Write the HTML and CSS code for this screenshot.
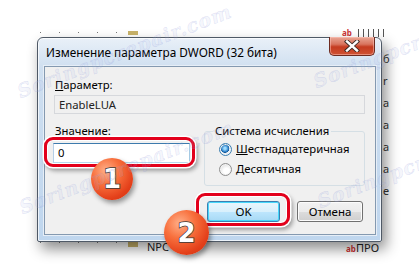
FILE: index.html
```html
<!DOCTYPE html>
<html lang="ru">
<head>
    <meta charset="UTF-8">
    <title>Изменение параметра DWORD</title>
    <link rel="stylesheet" href="styles.css">
</head>
<body>

<div class="desk">
    <div class="behind behind-top">
        <span class="dots"></span><span class="folder"></span>
        <span class="reg-icon">ab</span><span class="bars"></span>
    </div>

    <div class="dialog">
        <div class="titlebar">
            <span class="title">Изменение параметра DWORD (32 бита)</span>
            <button class="close">
                <svg width="20" height="12" viewBox="0 0 20 12">
                    <path d="M5 1.5 L15 10.5 M15 1.5 L5 10.5" stroke="#3a2a26" stroke-width="4.2" stroke-linecap="square"/>
                    <path d="M5 1.5 L15 10.5 M15 1.5 L5 10.5" stroke="#fff" stroke-width="2.4" stroke-linecap="square"/>
                </svg>
            </button>
        </div>

        <div class="client">
            <div class="label first"><u>П</u>араметр:</div>
            <div class="textbox readonly">EnableLUA</div>

            <div class="row">
                <div class="value-col">
                    <div class="label">Значение:</div>
                    <div class="textbox value">0</div>
                </div>
                <div class="group">
                    <div class="group-title">Система исчисления</div>
                    <div class="radio checked"><span class="dot"></span><span><u>Ш</u>естнадцатеричная</span></div>
                    <div class="radio"><span class="dot"></span><span><u>Д</u>есятичная</span></div>
                </div>
            </div>

            <div class="buttons">
                <button class="btn default">OK</button>
                <button class="btn cancel">Отмена</button>
            </div>

            <!-- annotation marks laid over the dialog -->
            <span class="ring ring-value"></span>
            <span class="ring ring-ok"></span>
            <span class="badge badge-1">1</span>
            <span class="badge badge-2">2</span>
        </div>
    </div>

    <div class="behind behind-bottom">
        <span class="dots"></span><span class="folder"></span><span class="npc">NPC</span>
        <span class="reg-icon small">ab</span><span class="pro">ПРО</span>
    </div>

    <div class="side-letters">б<br>r<br>а<br>а<br>а<br>а<br>е</div>

    <span class="mark mark-1">Soringpcrepair.com</span>
    <span class="mark mark-2">Soringpcrepair.com</span>
    <span class="mark mark-3">Soringpcrep</span>
    <span class="mark mark-4">Soringpcrep</span>
</div>

</body>
</html>
```

FILE: styles.css
```css
body {
    margin: 0;
    background: #fff;
    font-family: 'Noto Sans', 'Open Sans', sans-serif;
    font-size: 11.3px;
    color: #000;
    overflow: hidden;
}

.desk {
    position: relative;
    width: 419px;
    height: 279px;
    padding: 37px 0 0 37px;
    box-sizing: border-box;
    overflow: hidden;
}

/* registry editor peeking from behind the dialog */
.behind {
    position: absolute;
    left: 40px;
    width: 345px;
    height: 8px;
}

.behind-top {
    top: 29px;
}

.behind-bottom {
    top: 241px;
    height: 12px;
}

.dots {
    position: absolute;
    left: 0;
    top: 3px;
    width: 92px;
    height: 1px;
    background: repeating-linear-gradient(90deg, #777 0 1px, transparent 1px 19px);
}

.behind-bottom .dots {
    top: 1px;
}

.folder {
    position: absolute;
    left: 88px;
    top: 2px;
    width: 10px;
    height: 4px;
    background: #c9b36a;
}

.behind-bottom .folder {
    top: 0;
    height: 6px;
}

.npc {
    position: absolute;
    left: 107px;
    top: -2px;
    font-size: 11px;
    color: #222;
}

.reg-icon {
    position: absolute;
    left: 302px;
    top: -2px;
    font-size: 8px;
    font-weight: bold;
    color: #c33;
}

.reg-icon.small {
    left: 306px;
    top: 2px;
}

.bars {
    position: absolute;
    left: 318px;
    top: 0;
    width: 26px;
    height: 8px;
    background: repeating-linear-gradient(90deg, #555 0 1px, transparent 1px 5px);
}

.pro {
    position: absolute;
    left: 316px;
    top: -1px;
    font-size: 11px;
    color: #222;
}

.side-letters {
    position: absolute;
    left: 383px;
    top: 48px;
    font-size: 11px;
    line-height: 22px;
    color: #333;
}

/* dialog window */
.dialog {
    position: relative;
    z-index: 1;
    width: 345px;
    height: 205px;
    box-sizing: border-box;
    display: flex;
    flex-direction: column;
    border: 1px solid #4f5966;
    border-radius: 6px 6px 2px 2px;
    background: linear-gradient(#e9f0f8, #cfdff0 30px, #bfd6ee);
    box-shadow: 4px 7px 14px rgba(0, 0, 0, 0.45), inset 0 0 0 1px rgba(255, 255, 255, 0.7);
    padding: 0 5px 6px 6px;
}

.titlebar {
    height: 28px;
    display: flex;
    align-items: flex-start;
    justify-content: space-between;
}

.title {
    margin-top: 6px;
    margin-left: 2px;
    font-size: 11.8px;
}

.close {
    width: 46px;
    height: 19px;
    margin-top: -1px;
    margin-right: 1px;
    padding: 0;
    border: 1px solid #6e2b20;
    border-top: none;
    border-radius: 0 0 5px 5px;
    background: linear-gradient(#e9a796, #d9745e 40%, #c53b20 55%, #cf5334);
    box-shadow: inset 0 0 0 1px rgba(255, 200, 190, 0.5);
    display: flex;
    align-items: center;
    justify-content: center;
}

.client {
    position: relative;
    flex: 1;
    background: #f0f0f0;
    border: 1px solid #8499b0;
    box-shadow: 0 0 0 1px #e6eef7;
    padding: 0 10px 0 9px;
    display: flex;
    flex-direction: column;
}

.label {
    line-height: 14px;
    height: 14px;
    padding-left: 1px;
}

.label.first {
    margin-top: 11px;
}

.textbox {
    box-sizing: border-box;
    border: 1px solid #abadb3;
    border-top-color: #a3a6ad;
    padding: 0 4px;
    line-height: 17px;
}

.textbox.readonly {
    margin-top: 3px;
    height: 19px;
    background: #f0f0f0;
    border-color: #d6d8dc;
    color: #222;
}

.row {
    margin-top: 10px;
    display: flex;
    gap: 14px;
}

.value-col {
    width: 136px;
    display: flex;
    flex-direction: column;
}

.textbox.value {
    margin-top: 5px;
    margin-left: -1px;
    height: 20px;
    background: #fff;
    border-color: #3d7bad #a4c9e3 #b7d9ed #b5cfe7;
    line-height: 18px;
}

.group {
    flex: 1;
    margin-top: 7px;
    height: 55px;
    box-sizing: border-box;
    border: 1px solid #d5dfe5;
    border-radius: 3px;
    padding: 0 0 0 14px;
    display: flex;
    flex-direction: column;
}

.group-title {
    align-self: flex-start;
    margin: -8px 0 0 -6px;
    padding: 0 2px;
    background: #f0f0f0;
    line-height: 14px;
}

.radio {
    display: flex;
    align-items: center;
    gap: 4px;
    height: 20px;
    line-height: 14px;
}

.radio.checked {
    margin-top: 1px;
}

.dot {
    width: 11px;
    height: 11px;
    border-radius: 50%;
    border: 1px solid #8f8f8f;
    background: radial-gradient(circle at 60% 65%, #fff 0 30%, #dcdcdc 80%);
    box-shadow: inset 0 0 0 1px #f4f4f4;
}

.radio.checked .dot {
    border-color: #3c7fb1;
    background: radial-gradient(circle at 45% 40%, #9edcff 0 12%, #2b7ec6 38%, #155898 46%, #e9eef4 52%, #d8e1ea 100%);
}

.buttons {
    margin-top: 15px;
    display: flex;
    justify-content: flex-end;
    gap: 17px;
    padding-right: 2px;
}

.btn {
    height: 21px;
    box-sizing: border-box;
    padding: 0;
    font-family: inherit;
    font-size: 11.5px;
    color: #000;
    border: 1px solid #707070;
    border-radius: 3px;
    background: linear-gradient(#f2f2f2, #ebebeb 50%, #dddddd 51%, #cfcfcf);
    box-shadow: inset 0 0 0 1px #fcfcfc;
}

.btn.default {
    width: 73px;
    border-color: #3c7fb1;
    background: linear-gradient(#eaf6fd, #d9f0fc 50%, #bee6fd 51%, #a7d9f5);
    box-shadow: inset 0 0 0 1px #48d8fb;
}

.btn.cancel {
    width: 66px;
}

/* red annotation rings and numbered badges */
.ring {
    position: absolute;
    border: 3px solid #e3001b;
    border-radius: 9px;
    box-shadow: 0 0 0 1.5px #fff, 2px 3px 4px 1px rgba(0, 0, 0, 0.35), inset 0 0 0 1px #fff;
}

.ring-value {
    left: -1px;
    top: 70px;
    width: 145px;
    height: 24px;
}

.ring-ok {
    left: 151px;
    top: 126px;
    width: 88px;
    height: 27px;
}

.badge {
    position: absolute;
    width: 42px;
    height: 42px;
    border-radius: 50%;
    background: radial-gradient(circle at 35% 30%, #ffb08a 0, #f8703d 35%, #e4401a 70%, #c8300e);
    box-shadow: 2px 3px 5px rgba(0, 0, 0, 0.4);
    display: flex;
    align-items: center;
    justify-content: center;
    font-family: 'DejaVu Sans', sans-serif;
    font-weight: bold;
    font-size: 26px;
    color: #fff;
    -webkit-text-stroke: 1.5px #3a3a3a;
    paint-order: stroke fill;
}

.badge-1 {
    left: 46px;
    top: 91px;
}

.badge-2 {
    left: 119px;
    top: 143px;
    width: 45px;
    height: 45px;
    z-index: 2;
}

/* site watermark */
.mark {
    position: absolute;
    z-index: 3;
    font-family: 'DejaVu Serif', serif;
    font-style: italic;
    font-weight: bold;
    font-size: 19px;
    letter-spacing: 1px;
    color: rgba(175, 185, 235, 0.12);
    -webkit-text-stroke: 0.5px rgba(140, 150, 215, 0.28);
    transform: rotate(-21deg);
    transform-origin: left bottom;
    white-space: nowrap;
}

.mark-1 {
    left: 22px;
    top: 80px;
}

.mark-2 {
    left: 24px;
    top: 196px;
}

.mark-3 {
    left: 318px;
    top: 70px;
}

.mark-4 {
    left: 322px;
    top: 190px;
}
```
